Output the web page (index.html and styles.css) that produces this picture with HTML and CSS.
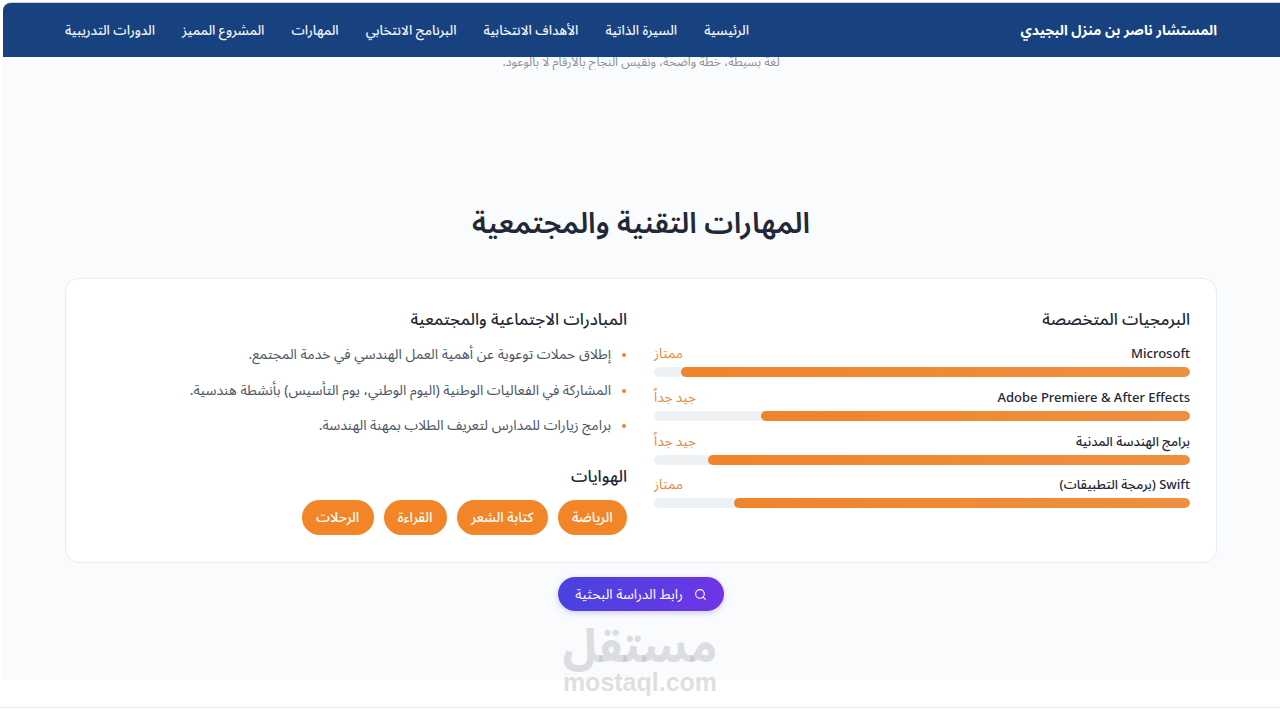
FILE: index.html
```html
<!DOCTYPE html>
<html lang="ar" dir="rtl">
<head>
<meta charset="utf-8">
<title>المهارات التقنية والمجتمعية</title>
<link rel="stylesheet" href="styles.css">
</head>
<body>
<div class="frame">
  <header class="nav">
    <div class="brand">المستشار ناصر بن منزل البجيدي</div>
    <nav class="links">
      <a>الرئيسية</a>
      <a>السيرة الذاتية</a>
      <a>الأهداف الانتخابية</a>
      <a>البرنامج الانتخابي</a>
      <a>المهارات</a>
      <a>المشروع المميز</a>
      <a>الدورات التدريبية</a>
    </nav>
  </header>
  <main class="page">
    <div class="clip"><p class="lead">لغة بسيطة، خطة واضحة، ونقيس النجاح بالأرقام لا بالوعود.</p></div>
    <h1 class="title">المهارات التقنية والمجتمعية</h1>
    <section class="card">
      <div class="col">
        <h2 class="sub">البرمجيات المتخصصة</h2>
        <div class="skills">
          <div class="skill">
            <div class="row"><span class="name">Microsoft</span><span class="level">ممتاز</span></div>
            <div class="track"><div class="fill" style="width:95%"></div></div>
          </div>
          <div class="skill">
            <div class="row"><span class="name">Adobe Premiere &amp; After Effects</span><span class="level">جيد جداً</span></div>
            <div class="track"><div class="fill" style="width:80%"></div></div>
          </div>
          <div class="skill">
            <div class="row"><span class="name">برامج الهندسة المدنية</span><span class="level">جيد جداً</span></div>
            <div class="track"><div class="fill" style="width:90%"></div></div>
          </div>
          <div class="skill">
            <div class="row"><span class="name">Swift (برمجة التطبيقات)</span><span class="level">ممتاز</span></div>
            <div class="track"><div class="fill" style="width:85%"></div></div>
          </div>
        </div>
      </div>
      <div class="col">
        <h2 class="sub">المبادرات الاجتماعية والمجتمعية</h2>
        <ul class="list">
          <li>إطلاق حملات توعوية عن أهمية العمل الهندسي في خدمة المجتمع.</li>
          <li>المشاركة في الفعاليات الوطنية (اليوم الوطني، يوم التأسيس) بأنشطة هندسية.</li>
          <li>برامج زيارات للمدارس لتعريف الطلاب بمهنة الهندسة.</li>
        </ul>
        <h2 class="sub hobbies">الهوايات</h2>
        <div class="chips">
          <span class="chip">الرياضة</span>
          <span class="chip">كتابة الشعر</span>
          <span class="chip">القراءة</span>
          <span class="chip">الرحلات</span>
        </div>
      </div>
    </section>
    <div class="cta-wrap">
      <a class="cta">
        <svg class="cta-icon" viewBox="0 0 24 24" width="13" height="13" fill="none" stroke="currentColor" stroke-width="2" stroke-linecap="round"><circle cx="11" cy="11" r="8"/><path d="M21 21l-4.3-4.3"/></svg>
        <span>رابط الدراسة البحثية</span>
      </a>
    </div>
  </main>
  <div class="mark" aria-hidden="true">
    <div class="mark-ar">مستقل</div>
    <div class="mark-en">mostaql.com</div>
  </div>
</div>
</body>
</html>
```
FILE: styles.css
```css
* { box-sizing: border-box; }
html, body { margin: 0; height: 709px; overflow: hidden; background: #fff; }
body { font-family: "Noto Sans", "Noto Sans Arabic", "DejaVu Sans", sans-serif; color: #1f2937; }
.frame { position: relative; height: 708px; padding: 3px 0 0 3px; border-bottom: 1px solid #e5e7eb; background: #fff; }
.nav { height: 54px; background: #17417f; border-top-left-radius: 8px; box-shadow: 0 -1px 0 #c5d3e3; color: #fff; display: flex; align-items: center; padding: 0 63px 0 62px; justify-content: space-between; }
.brand { font-size: 13.9px; font-weight: 700; }
.links { display: flex; gap: 27px; padding-top: 1px; }
.links a { font-size: 13.35px; font-weight: 500; color: #f1f5f9; }
.page { background: #fafbfd; height: 623px; padding: 0 63px 0 62px; }
.clip { height: 13px; overflow: hidden; display: flex; align-items: flex-end; justify-content: center; }
.lead { margin: 0; font-size: 12.2px; line-height: 16px; color: #8b8f96; }
.title { margin: 0; padding-top: 129px; height: 208px; text-align: center; font-size: 29px; font-weight: 600; line-height: 46px; color: #1f2937; }
.card { height: 285px; background: #fff; border: 1px solid #e8ebef; border-radius: 14px; padding: 26px; display: grid; grid-template-columns: 536px 1fr; gap: 27px; }
.sub { margin: 0; font-size: 16.5px; font-weight: 500; line-height: 28px; color: #1f2937; }
.skills { display: flex; flex-direction: column; gap: 8.8px; margin-top: 9px; }
.skill { display: flex; flex-direction: column; gap: 3px; }
.row { display: flex; justify-content: space-between; font-size: 13px; line-height: 22px; height: 22px; }
.name { font-weight: 500; color: #1f2937; }
.level { color: #e8893a; font-size: 13.5px; }
.track { height: 10px; border-radius: 6px; background: #eef1f4; overflow: hidden; }
.fill { height: 100%; border-radius: 6px; background: linear-gradient(90deg, #f0842a, #ee9040); }
.list { list-style: none; margin: 10px 0 0; padding: 0; }
.list li { position: relative; padding-right: 16px; font-size: 14px; line-height: 22px; margin-bottom: 13.5px; color: #4b5563; }
.list li::before { content: ""; position: absolute; right: 1px; top: 10px; width: 4px; height: 4px; border-radius: 50%; background: #f0842a; }
.hobbies { margin-top: 26px; }
.chips { display: flex; gap: 10px; margin-top: 10px; }
.chip { height: 35px; padding: 0 14.3px; border-radius: 18px; background: #f28527; color: #fff; font-size: 13.8px; font-weight: 500; display: flex; align-items: center; }
.cta-wrap { display: flex; justify-content: center; margin-top: 14px; }
.cta { height: 34px; width: 166px; border-radius: 17px; background: linear-gradient(90deg, #4743e0, #6f35e6); color: #fff; font-size: 13.8px; display: flex; align-items: center; justify-content: center; gap: 11px; box-shadow: 0 2px 6px rgba(90,60,220,.25); }
.cta-icon { flex: none; }
.mark { position: absolute; left: 562px; top: 618px; width: 156px; text-align: center; color: rgba(170,172,176,.38); direction: ltr; }
.mark-ar { font-size: 45px; font-weight: 800; line-height: 54px; direction: rtl; }
.mark-en { font-family: "Liberation Sans", sans-serif; font-size: 25px; font-weight: 700; line-height: 20px; }
```
